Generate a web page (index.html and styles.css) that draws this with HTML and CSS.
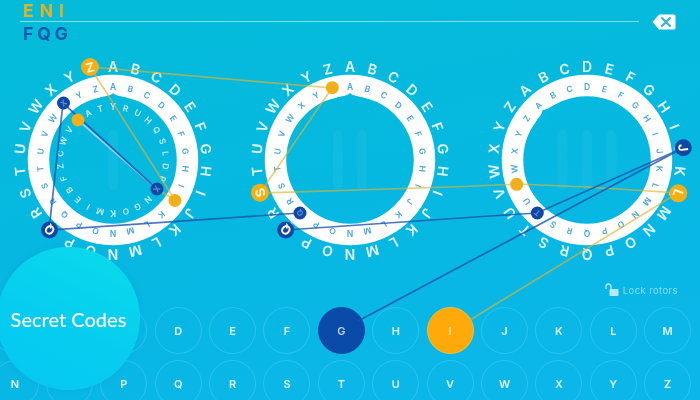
FILE: index.html
```html
<!DOCTYPE html>
<html lang="en">
<head>
<meta charset="utf-8">
<title>Secret Codes</title>
<link rel="stylesheet" href="styles.css">
</head>
<body>
<main class="app">
  <header class="tape">
    <div class="tape-text">
      <div class="word word-in">ENI</div>
      <div class="word word-out">FQG</div>
    </div>
    <svg class="erase" width="24" height="16" viewBox="0 0 24 16" aria-label="Delete">
      <path class="erase-body" d="M7 0.500H22a1.500 1.500 0 0 1 1.500 1.500V14a1.500 1.500 0 0 1-1.500 1.500H7L0.500 8Z"/>
      <path class="erase-x" d="M10 4L18 12M18 4L10 12"/>
    </svg>
  </header>

  <section class="rotors">
    <svg class="rotor" data-offset="0" data-bars="1" data-inner="YRUHQSLDPXNGOKMIEBFZCWVJAT" viewBox="-105 -105 210 210"></svg>
    <svg class="rotor" data-offset="0" data-bars="2" viewBox="-105 -105 210 210"></svg>
    <svg class="rotor" data-offset="3" data-bars="3" viewBox="-105 -105 210 210"></svg>
  </section>

  <div class="lock">
    <svg width="15" height="14" viewBox="0 0 15 14">
      <path class="lock-shackle" d="M1 6V3.500a2.500 2.500 0 0 1 5 0V6"/>
      <rect class="lock-body" x="4.500" y="6" width="9" height="7" rx="1"/>
    </svg>
    <span>Lock rotors</span>
  </div>

  <section class="keys">
    <button class="key" aria-label="A"></button><button class="key" aria-label="B"></button><button class="key" aria-label="C"></button><button class="key">D</button><button class="key">E</button><button class="key">F</button><button class="key key-out">G</button><button class="key">H</button><button class="key key-in">I</button><button class="key">J</button><button class="key">K</button><button class="key">L</button><button class="key">M</button>
    <button class="key">N</button><button class="key" aria-label="O"></button><button class="key">P</button><button class="key">Q</button><button class="key">R</button><button class="key">S</button><button class="key">T</button><button class="key">U</button><button class="key">V</button><button class="key">W</button><button class="key">X</button><button class="key">Y</button><button class="key">Z</button>
  </section>

  <svg class="wires" width="700" height="400" viewBox="0 0 700 400">
    <polyline class="wire wire-gold" points="470,320 678,193 587,187 517,184 465,186.500 260,193 332,88 90,67 175,200"/>
    <line class="wire wire-pale" x1="78" y1="120" x2="157" y2="189"/>
    <line class="wire wire-pale" x1="300" y1="213" x2="286" y2="230"/>
    <line class="wire wire-gold" x1="175" y1="200" x2="157" y2="189"/>
    <polyline class="wire wire-blue" points="358,321 683,148 537,213 490,216 286,230"/>
    <polyline class="wire wire-blue" points="300,213 49,230 63,103 157,189"/>
    <g id="dots"></g>
  </svg>

  <div class="badge">Secret Codes</div>
</main>
<script src="script.js"></script>
</body>
</html>
```
FILE: styles.css
```css
* { box-sizing: border-box; }
html, body { margin: 0; height: 100%; overflow: hidden; }
body { font-family: "Inter", "Liberation Sans", sans-serif; color: #fff; }
.app {
  position: relative;
  width: 700px;
  height: 400px;
  overflow: hidden;
  background: linear-gradient(170deg, #04bbd8 0%, #05b8e0 45%, #0cb6ea 100%);
  filter: blur(.35px);
}
.tape {
  height: 55px;
  padding: 0 24px 0 20px;
  display: flex;
  align-items: flex-start;
  justify-content: space-between;
}
.tape-text { flex: 1; margin-right: 13px; }
.word { padding-left: 3px; font-size: 17.500px; font-weight: 700; line-height: 21px; height: 21px; }
.word-in { color: #e3b21f; letter-spacing: 6px; border-bottom: 1px solid rgba(255,255,255,.5); height: 22px; }
.word-out { color: #0b5bb0; letter-spacing: 4px; padding-top: 1px; }
.erase { margin-top: 14px; }
.erase-body { fill: #fff; }
.erase-x { fill: none; stroke: #2bb5cf; stroke-width: 2; stroke-linecap: round; }

.rotors { display: flex; gap: 27px; padding-left: 8px; height: 210px; }
.rotor { width: 210px; height: 210px; flex: none; overflow: visible; }
.ring { fill: none; stroke: #fff; stroke-width: 21.500; }
.notch { fill: #06b9e0; }
.bar { fill: rgba(255,255,255,.045); }
.t-outer { font-size: 14px; font-weight: 600; fill: #e4f7fc; text-anchor: middle; dominant-baseline: central; }
.t-ring { font-size: 8.500px; font-weight: 600; fill: #4aa6e2; text-anchor: middle; dominant-baseline: central; }
.t-inner { font-size: 8.500px; font-weight: 600; fill: #c4ebf8; text-anchor: middle; dominant-baseline: central; }

.lock {
  height: 42px;
  padding: 18px 22px 0 0;
  display: flex;
  justify-content: flex-end;
  align-items: flex-start;
  gap: 3px;
  font-size: 9.500px;
  letter-spacing: .4px;
  color: rgba(210,242,250,.62);
}
.lock span { padding-top: 2px; }
.lock-shackle { fill: none; stroke: #b8e8f6; stroke-width: 1.300; }
.lock-body { fill: #b8e8f6; }

.keys {
  display: grid;
  grid-template-columns: repeat(13, 47px);
  grid-auto-rows: 47px;
  column-gap: 7.400px;
  row-gap: 6px;
  margin-left: -8.500px;
}
.key {
  width: 47px;
  height: 47px;
  padding: 0;
  border: 1px solid rgba(60,205,245,.6);
  border-radius: 50%;
  background: transparent;
  color: #e0f6fc;
  font: 600 11px "Inter", "Liberation Sans", sans-serif;
}
.key-out { background: #0a4aa8; border-color: #0a4aa8; color: #b8d6f0; }
.key-in { background: #ffa90a; border-color: #e9c23a; color: #ffe0a0; }

.wires { position: absolute; left: 0; top: 0; pointer-events: none; }
.wire { fill: none; stroke-width: 1.700; }
.wire-gold { stroke: #e0b22e; stroke-opacity: .65; }
.wire-blue { stroke: #1a52ae; stroke-opacity: .8; }
.wire-pale { stroke: #d8e4f2; stroke-opacity: .7; }
.dot-gold { fill: #f5ae14; }
.dot-blue { fill: #0e48a4; }
.dot-label { font-size: 8px; font-weight: 700; text-anchor: middle; dominant-baseline: central; font-family: "Inter", sans-serif; }
.dot-label-gold { fill: #d9b23a; }
.dot-label-blue { fill: #5f8dd2; }
.dot-label-big { font-size: 13px; fill: #fff4d8; }

.badge {
  position: absolute;
  left: -3px;
  top: 247px;
  width: 143px;
  height: 143px;
  border-radius: 50%;
  display: flex;
  align-items: center;
  justify-content: center;
  font-family: "Lato", "Liberation Sans", sans-serif;
  font-size: 20px;
  font-weight: 500;
  white-space: nowrap;
  background: linear-gradient(205deg, #0adcea 0%, #06cdf0 55%, #06c8f2 100%);
  box-shadow: 0 0 6px rgba(0,120,180,.15);
}
```
FILE: script.js
```javascript
var NS = "http://www.w3.org/2000/svg";
var ABC = "ABCDEFGHIJKLMNOPQRSTUVWXYZ";
var STEP = 360 / 26;

function el(tag, attrs, parent, text) {
  var node = document.createElementNS(NS, tag);
  for (var k in attrs) node.setAttribute(k, attrs[k]);
  if (text) node.textContent = text;
  parent.appendChild(node);
  return node;
}

function letters(svg, seq, cls, radius, offset) {
  for (var i = 0; i < seq.length; i++) {
    var a = (i - offset) * STEP;
    el("text", { "class": cls, x: 0, y: -radius, transform: "rotate(" + a.toFixed(2) + ")" }, svg, seq[i]);
  }
}

document.querySelectorAll(".rotor").forEach(function (svg) {
  var offset = +svg.dataset.offset;
  var bars = +svg.dataset.bars;
  for (var b = 0; b < bars; b++) {
    el("rect", { "class": "bar", x: (b - (bars - 1) / 2) * 24.500 - 5, y: -30, width: 10, height: 60, rx: 5 }, svg);
  }
  el("circle", { "class": "ring", r: 74.500 }, svg);
  el("path", {
    "class": "notch",
    d: "M-13 -62.500C-7 -64 -3 -64 0 -67C3 -64 7 -64 13 -62.500L13 -58L-13 -58Z",
    transform: "rotate(" + (-offset * STEP) + ")"
  }, svg);
  letters(svg, ABC, "t-outer", 94, offset);
  letters(svg, ABC, "t-ring", 73, offset);
  if (svg.dataset.inner) letters(svg, svg.dataset.inner, "t-inner", 53, 0);
});

var dots = document.getElementById("dots");
[
  [90, 67, 9, "gold", "Z", 1, -13.800],
  [175, 200.500, 6.500, "gold", "J", 0, 123],
  [78, 120, 6.500, "gold", "J", 0, -41],
  [63.500, 103, 6.500, "blue", "X", 0, -41],
  [157, 189, 6.500, "blue", "X", 0, 123],
  [49.500, 230, 8.500, "blue", "Q", 1, 222],
  [332.300, 87.700, 6.500, "gold", "Z", 0, -14],
  [260, 192.700, 9, "gold", "S", 1, 249],
  [300, 213, 6.500, "blue", "Q", 0, 222],
  [285.700, 230, 8.500, "blue", "Q", 1, 222],
  [678.300, 193.300, 9, "gold", "L", 1, 111],
  [683.300, 147.700, 8.500, "blue", "J", 1, 83],
  [537.300, 213, 6.500, "blue", "T", 0, 222],
  [516.700, 184.300, 6.500, "gold", "V", 0, 249]
].forEach(function (d) {
  el("circle", { "class": "dot-" + d[3], cx: d[0], cy: d[1], r: d[2] }, dots);
  el("text", {
    "class": "dot-label dot-label-" + d[3] + (d[5] ? " dot-label-big" : ""),
    x: d[0], y: d[1],
    transform: "rotate(" + d[6] + " " + d[0] + " " + d[1] + ")"
  }, dots, d[4]);
});
```
